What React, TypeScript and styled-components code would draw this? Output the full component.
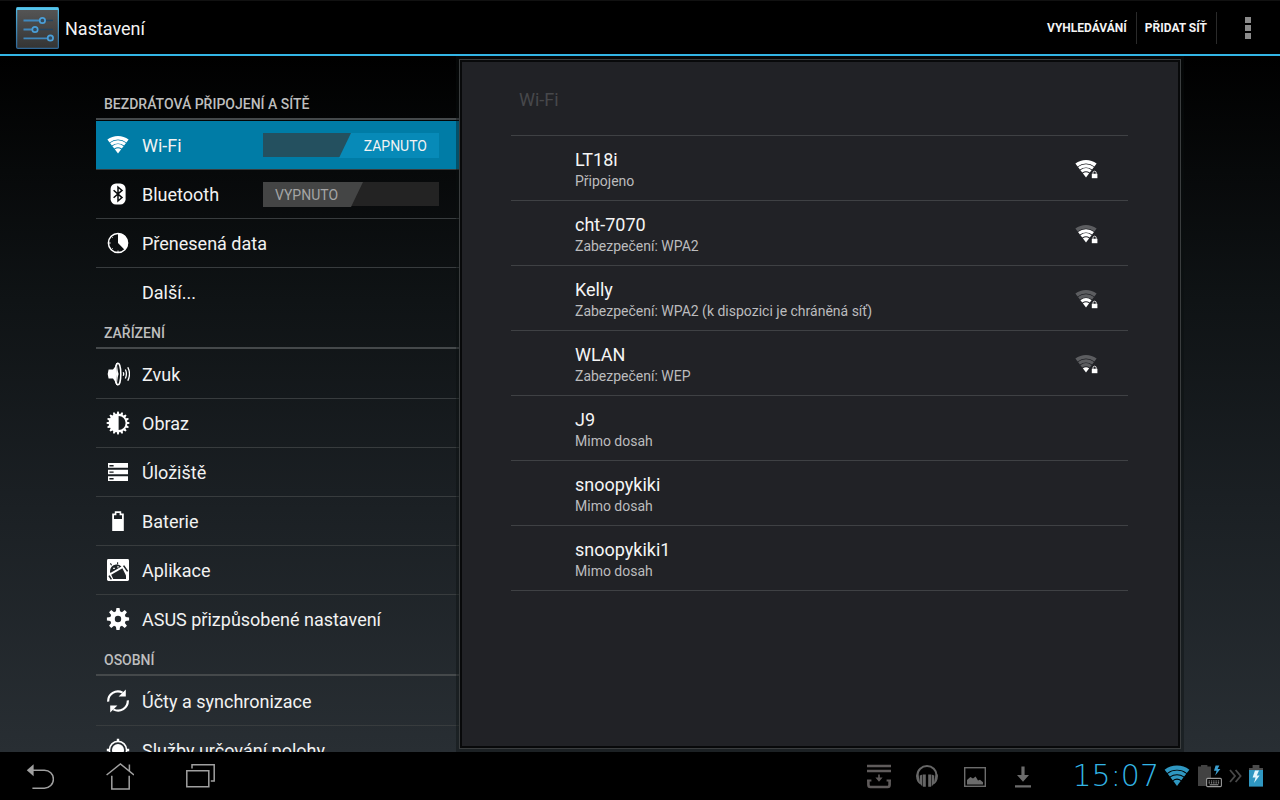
import React from "react";
import styled, { createGlobalStyle } from "styled-components";

const GlobalStyle = createGlobalStyle`
  *, *::before, *::after { box-sizing: border-box; }
  body {
    margin: 0;
    background: #000;
    color: #f2f2f2;
    font-family: Roboto, "Noto Sans", sans-serif;
  }
  button { font: inherit; color: inherit; background: none; border: 0; padding: 0; cursor: pointer; }
  a { color: inherit; text-decoration: none; }
  ul { list-style: none; margin: 0; padding: 0; }
  h1, h2, h3, p { margin: 0; font-weight: 400; }
`;

const Screen = styled.div`
  display: flex;
  flex-direction: column;
  height: 100vh;
  overflow: hidden;
`;

/* ---------- action bar ---------- */

const ActionBar = styled.header`
  display: flex;
  align-items: center;
  flex: none;
  height: 56px;
  padding: 0 16px 0 15px;
  background: #000;
  border-top: 1px solid #111;
  border-bottom: 2px solid #33b5e5;
`;

const AppTitle = styled.h1`
  flex: 1;
  margin-left: 6px;
  padding-top: 2px;
  font-size: 18px;
  line-height: 24px;
  color: #f3f3f3;
`;

const ActionButton = styled.button`
  height: 32px;
  padding: 0 9px 0 8px;
  border-right: 1px solid #2a2a2a;
  font-size: 12px;
  font-weight: 700;
  color: #f3f3f3;
`;

const OverflowButton = styled.button`
  display: flex;
  justify-content: center;
  align-items: center;
  width: 32px;
  height: 48px;
  margin-left: 15px;
`;

/* ---------- body ---------- */

const Body = styled.main`
  display: flex;
  flex: 1;
  min-height: 0;
  padding: 0 99px 0 96px;
  background: linear-gradient(#000 0%, #0f1315 35%, #1b2024 65%, #282e33 100%);
`;

const Sidebar = styled.nav`
  flex: none;
  width: 363px;
  padding-top: 31px;
  overflow-y: auto;
  scrollbar-width: none;
`;

const Category = styled.h2`
  height: 33px;
  margin-bottom: 1px;
  padding: 8px 8px 0;
  border-bottom: 2px solid #45494b;
  font-size: 14px;
  line-height: 18px;
  font-weight: 500;
  color: #bebebe;
`;

const Item = styled.li<{ $selected?: boolean }>`
  display: flex;
  align-items: center;
  height: 49px;
  padding-right: 20px;
  border-bottom: 1px solid #383c3e;
  background: ${(p) => (p.$selected ? "#007ca6" : "transparent")};
  &:last-child { height: 48px; border-bottom: 0; }
`;

const ItemLink = styled.a`
  display: flex;
  flex: 1;
  align-items: center;
  gap: 12px;
  height: 48px;
  padding-left: 10px;
`;

const ItemLabel = styled.span`
  padding-top: 2px;
  font-size: 18px;
  line-height: 24px;
  white-space: nowrap;
`;

const IconSlot = styled.span`
  display: flex;
  flex: none;
  width: 24px;
  height: 24px;
`;

const SwitchTrack = styled.label<{ $on: boolean }>`
  display: flex;
  justify-content: ${(p) => (p.$on ? "flex-end" : "flex-start")};
  width: 176px;
  height: 24px;
  background: ${(p) => (p.$on ? "#24505f" : "#232323")};
  cursor: pointer;
`;

const SwitchInput = styled.input`
  appearance: none;
  width: 0;
  height: 0;
  margin: 0;
`;

const SwitchThumb = styled.span<{ $on: boolean }>`
  width: 100px;
  height: 25px;
  padding: ${(p) => (p.$on ? "0 12px 0 0" : "0 0 0 12px")};
  text-align: ${(p) => (p.$on ? "right" : "left")};
  font-size: 14px;
  line-height: 26px;
  color: ${(p) => (p.$on ? "#f3f3f3" : "#a5a5a5")};
  background: ${(p) => (p.$on ? "#078ab8" : "#444545")};
  clip-path: ${(p) =>
    p.$on
      ? "polygon(12px 0, 100% 0, 100% 100%, 0 100%)"
      : "polygon(0 0, 100% 0, 88px 100%, 0 100%)"};
`;

/* ---------- detail panel ---------- */

const Frame = styled.section`
  display: flex;
  flex: 1;
  min-width: 0;
  margin: 3px 0;
  padding: 2px;
  border: 1px solid #3a3d3e;
  background: #08090a;
  box-shadow: 0 0 0 3px rgba(10, 14, 16, 0.4);
  z-index: 1;
`;

const Panel = styled.div`
  flex: 1;
  min-width: 0;
  padding: 0 50px 0 49px;
  overflow-y: auto;
  scrollbar-width: none;
  background: #212226;
`;

const PanelTitle = styled.h2`
  height: 74px;
  padding: 26px 8px 0;
  border-bottom: 1px solid #3f4144;
  font-size: 18px;
  line-height: 24px;
  color: #47484b;
`;

const NetworkButton = styled.button`
  display: flex;
  align-items: center;
  justify-content: space-between;
  width: 100%;
  height: 65px;
  padding: 2px 30px 0 64px;
  border-bottom: 1px solid #3f4144;
  text-align: left;
`;

const NetworkName = styled.span`
  display: block;
  font-size: 18px;
  line-height: 24px;
  color: #f5f5f5;
`;

const NetworkState = styled.span`
  display: block;
  font-size: 14px;
  line-height: 18px;
  color: #bcbcbe;
`;

/* ---------- system bar ---------- */

const SystemBar = styled.footer`
  display: flex;
  align-items: center;
  justify-content: space-between;
  flex: none;
  height: 48px;
  padding-right: 17px;
  background: #000;
`;

const Group = styled.div<{ $gap?: number }>`
  display: flex;
  align-items: center;
  gap: ${(p) => p.$gap ?? 0}px;
`;

const NavButton = styled.button`
  display: flex;
  align-items: center;
  justify-content: center;
  width: 80px;
  height: 48px;
`;

const Clock = styled.time`
  width: 128px;
  text-align: right;
  padding-right: 4px;
  font-family: "DejaVu Sans", sans-serif;
  font-weight: 200;
  font-size: 30px;
  line-height: 32px;
  color: #33b5e5;
`;

/* ---------- icons ---------- */

const SIN = 0.607;
const COS = 0.794;

function fan(r: number) {
  const x = r * SIN;
  const y = 20.5 - r * COS;
  return `M${12 - x} ${y}A${r} ${r} 0 0 1 ${12 + x} ${y}`;
}

type WifiProps = { level?: number; color?: string; dim?: string; locked?: boolean; size?: number };

function WifiIcon({ level = 4, color = "#fff", dim = "#5c5d60", locked, size = 24 }: WifiProps) {
  const tone = (n: number) => (level >= n ? color : dim);
  return (
    <svg width={size} height={size} viewBox="0 0 24 24" fill="none" aria-hidden="true">
      <path d={fan(15.7)} stroke={tone(4)} strokeWidth="3.6" />
      <path d={fan(11.6)} stroke={tone(3)} strokeWidth="3.1" />
      <path d={fan(7.7)} stroke={tone(2)} strokeWidth="3.1" />
      <path d={fan(5.2) + "L12 20.5Z"} fill={tone(1)} />
      {locked && (
        <>
          <path d="M16.8 22V16.4L18.2 13.2H22.8L24 16.4V22Z" fill="#212226" />
          <path d="M17.8 16.8H23.4V21.2H17.8Z" fill="#fff" />
          <path d="M19 17.2V15.8a1.6 1.6 0 0 1 3.2 0V17.2" stroke="#ddd" strokeWidth="1" />
        </>
      )}
    </svg>
  );
}

function Glyph({ children }: { children: React.ReactNode }) {
  return (
    <svg width="24" height="24" viewBox="0 0 24 24" fill="#fff" aria-hidden="true">
      {children}
    </svg>
  );
}

const polar = (r: number, deg: number) => {
  const a = (deg * Math.PI) / 180;
  return `${(12 + r * Math.sin(a)).toFixed(2)} ${(12 - r * Math.cos(a)).toFixed(2)}`;
};

/* outline of a toothed wheel */
function wheel(teeth: number, inner: number, outer: number, base: number, tip: number) {
  const points: string[] = [];
  for (let i = 0; i < teeth; i++) {
    const a = (360 / teeth) * i;
    points.push(polar(inner, a - base), polar(outer, a - tip), polar(outer, a + tip), polar(inner, a + base));
  }
  return "M" + points.join("L") + "Z";
}

const BluetoothIcon = () => (
  <Glyph>
    <rect x="4.6" y="1.4" width="15" height="21.2" rx="5.4" />
    <path d="M7.6 8.2L16 15.6L12 19V5L16 8.4L7.6 15.8" fill="none" stroke="#0a0c0d" strokeWidth="1.5" />
  </Glyph>
);

const DataIcon = () => (
  <Glyph>
    <circle cx="12" cy="12" r="9.6" fill="none" stroke="#fff" strokeWidth="1.5" />
    <path d="M12 12V2.2A9.8 9.8 0 0 1 18.8 19Z" />
    <path d="M2.5 12H4.6M12 21.5V19.6M5.2 5.2L6.6 6.6M5.2 18.8L6.6 17.4" stroke="#fff" strokeWidth="1" />
  </Glyph>
);

const SoundIcon = () => (
  <Glyph>
    <path d="M2.6 7.6H7Q9.4 5 10.2 1.2L12 .4V23.6L10.2 22.8Q9.4 19 7 16.4H2.6Q.8 12 2.6 7.6Z" />
    <ellipse cx="12" cy="12" rx="2.8" ry="10.8" fill="#15191b" stroke="#fff" strokeWidth="1.5" />
    <path d="M11 3Q9 12 11 21L11.8 15Q13.4 12 11.8 9Z" />
    <path d="M17.2 10.2Q18.2 12 17.2 13.8M19.4 7.6Q21.4 12 19.4 16.4M21.8 5.2Q25.2 12 21.8 18.8" fill="none" stroke="#fff" strokeWidth="1.3" />
  </Glyph>
);

const DisplayIcon = () => (
  <Glyph>
    <path d={wheel(16, 9.2, 11.4, 8.5, 3.5)} />
    <path d="M12.6 5A7 7 0 0 1 12.6 19Z" fill="#171b1e" />
  </Glyph>
);

const StorageIcon = () => (
  <Glyph>
    <path d="M2 3H22V7.8H2ZM2 9.8H22V14.2H2ZM2 16.2H22V21H2Z" />
    <path d="M3.4 5H7.6V6.4H3.4ZM3.4 11.4H7.6V12.8H3.4ZM3.4 18H7.6V19.4H3.4Z" fill="#1a1e21" />
  </Glyph>
);

const BatteryIcon = () => (
  <Glyph>
    <path d="M6.2 4.4H8.8V2.2H15.2V4.4H17.8V22H6.2ZM8 6.2V10H16V6.2H13.6V4H10.4V6.2Z" fillRule="evenodd" />
  </Glyph>
);

const AppsIcon = () => (
  <Glyph>
    <rect x="1" y="1" width="22" height="22" rx="1.4" />
    <path d="M4 13.6Q4.2 7.6 10 6.6Q13.2 6.2 15.4 8.6L4.4 15Z" fill="#1e2326" />
    <path d="M5.6 7.2L4.4 5.4M11.6 6.6V4.2" stroke="#1e2326" strokeWidth="1.1" />
    <path d="M7.2 10.3h1.6M11.2 8.8h1.6" stroke="#fff" strokeWidth="1.2" />
    <path d="M5.2 16.8L16.4 10.2L20 17.6V21H7.2Z" fill="#1e2326" />
    <path d="M17.6 7.6L21.6 13.4M3 17.6L5.4 21.4" stroke="#1e2326" strokeWidth="1.6" />
  </Glyph>
);

const GearIcon = () => (
  <Glyph>
    <path d={wheel(8, 7.9, 11.2, 15, 8) + "M12 8.8a3.2 3.2 0 1 0 0 6.4a3.2 3.2 0 0 0 0-6.4Z"} fillRule="evenodd" />
  </Glyph>
);

const SyncIcon = () => (
  <Glyph>
    <path d="M2.2 12.6A9.7 9.7 0 0 1 16.6 3.6M21.8 11.4A9.7 9.7 0 0 1 7.4 20.4" fill="none" stroke="#fff" strokeWidth="2.2" />
    <path d="M19.8 .6V7.4H12.6ZM4.2 23.4V16.6H11.4Z" />
  </Glyph>
);

const LocationIcon = () => (
  <Glyph>
    <circle cx="12" cy="12" r="8.6" fill="none" stroke="#fff" strokeWidth="1.6" />
    <circle cx="12" cy="12" r="6" />
    <path d="M10.8 .8H13.2V4H10.8ZM10.8 20H13.2V23.2H10.8ZM.8 10.8H4V13.2H.8ZM20 10.8H23.2V13.2H20Z" />
  </Glyph>
);

const SettingsLogo = () => (
  <svg width="44" height="44" viewBox="0 0 44 44" aria-hidden="true">
    <defs>
      <linearGradient id="plate" x1="0" y1="0" x2="0" y2="1">
        <stop offset="0" stopColor="#565656" />
        <stop offset="1" stopColor="#343434" />
      </linearGradient>
      <linearGradient id="rim" x1="0" y1="0" x2="0" y2="1">
        <stop offset="0" stopColor="#4fb4e0" />
        <stop offset="1" stopColor="#2f6695" />
      </linearGradient>
    </defs>
    <rect x="1.6" y="2" width="41.8" height="40.4" rx="1.5" fill="url(#plate)" stroke="url(#rim)" strokeWidth="1.3" />
    <path d="M1.6 1.2H43.4V4H1.6Z" fill="#55c5ec" />
    <path d="M30 14.5H38M22 23.5H38" stroke="#24445f" strokeWidth="1.6" />
    <path d="M8.5 14.5H25M8.5 23.5H17M8.5 32.4H32.4" stroke="#4088bd" strokeWidth="1.8" />
    <g fill="#35495a" stroke="#4a9fd8" strokeWidth="1.7">
      <circle cx="27.4" cy="14.5" r="2.7" />
      <circle cx="20" cy="23.5" r="2.7" />
      <circle cx="35.4" cy="32" r="2.7" />
    </g>
  </svg>
);

const OverflowDots = () => (
  <svg width="6" height="22" viewBox="0 0 6 22" fill="#8b8b8b" aria-hidden="true">
    <path d="M0 0H6V6H0ZM0 8H6V14H0ZM0 16H6V22H0Z" />
  </svg>
);

const BackIcon = () => (
  <svg width="28" height="28" viewBox="0 0 28 28" fill="none" aria-hidden="true">
    <path d="M6 8.2H18.4A8.9 8.9 0 0 1 18.4 26.2H6.4" stroke="#a0a0a0" strokeWidth="1.5" />
    <path d="M.8 8.2L7.6 2.2V14.2Z" fill="#a0a0a0" />
  </svg>
);

const HomeIcon = () => (
  <svg width="28" height="28" viewBox="0 0 28 28" fill="none" stroke="#a0a0a0" strokeWidth="1.5" aria-hidden="true">
    <path d="M.6 13L14.4 2L28 13M23.4 9V2.4M5.8 13.8V27H23.2V13.8" />
  </svg>
);

const RecentsIcon = () => (
  <svg width="30" height="28" viewBox="0 0 30 28" fill="none" stroke="#a0a0a0" strokeWidth="1.5" aria-hidden="true">
    <path d="M1.8 8.8H23.8V24.8H1.8ZM7 6.6V2.8H29.2V19H25.8" />
  </svg>
);

const InboxIcon = () => (
  <svg width="24" height="26" viewBox="0 0 24 26" fill="none" stroke="#5f5b5b" strokeWidth="2.6" aria-hidden="true">
    <path d="M0 3H24M0 8H24M1.4 17V21.8Q1.4 24 3.4 24H20.6Q22.6 24 22.6 21.8V17" />
    <path d="M0 17.4H4.4M19.6 17.4H24" strokeWidth="2" />
    <path d="M11.2 11.4H12.8V14.6H15.6L12 18.8L8.4 14.6H11.2Z" fill="#5f5b5b" stroke="none" />
  </svg>
);

const HeadphonesIcon = () => (
  <svg width="24" height="24" viewBox="0 0 24 24" fill="#666" aria-hidden="true">
    <path d="M2.4 13V11.4A9.6 9.4 0 0 1 21.6 11.4V13" fill="none" stroke="#666" strokeWidth="2" />
    <path d="M1.2 10.6H3.4L5.4 20.4Q1.2 17.6 1.2 13ZM22.8 10.6H20.6L18.6 20.4Q22.8 17.6 22.8 13Z" />
    <path d="M4.8 11.6L7.4 10.4V22.4L4.8 19.6ZM8 10.4H10.8V22.8H8ZM19.2 11.6L16.6 10.4V22.4L19.2 19.6ZM16 10.4H13.2V22.8H16Z" />
  </svg>
);

const PictureIcon = () => (
  <svg width="24" height="24" viewBox="0 0 24 24" aria-hidden="true">
    <rect x="1.7" y="3.7" width="20.6" height="18.6" fill="none" stroke="#6c6c6c" strokeWidth="1.4" />
    <path d="M4 20.4V16L7.4 13L10 14.6L12.6 12.6L15 16.4L17 15.8L20 18.2V20.4Z" fill="#6c6c6c" />
  </svg>
);

const DownloadIcon = () => (
  <svg width="24" height="24" viewBox="0 0 24 24" fill="#6c6c6c" aria-hidden="true">
    <path d="M10.4 2.6H13.6V11H18L12 17.8L6 11H10.4ZM4 21.2H20V23.6H4Z" />
  </svg>
);

const DockBatteryIcon = () => (
  <svg width="24" height="24" viewBox="0 0 24 24" aria-hidden="true">
    <path d="M0 2.6H3V1H9.4V2.6H13V22H0Z" fill="#424242" />
    <path d="M17.6 1.4L16 6.8H18.6L17.2 11.6L22.4 5H19.6L21.4 1.4Z" fill="#3b9fd0" />
    <rect x="8.6" y="14.4" width="14.8" height="8.2" rx="1" fill="#000" stroke="#9a9a9a" strokeWidth="1.1" />
    <path d="M10.6 17H21.6M10.6 18.9H21.6" stroke="#9a9a9a" strokeWidth="1.1" strokeDasharray="1.3 1" />
    <path d="M11.6 20.8H20.4" stroke="#9a9a9a" strokeWidth="1.1" />
  </svg>
);

const ChevronsIcon = () => (
  <svg width="13" height="14" viewBox="0 0 13 14" fill="none" stroke="#484848" strokeWidth="1.8" aria-hidden="true">
    <path d="M1 1L6 7L1 13M6.6 1L11.6 7L6.6 13" />
  </svg>
);

const ChargingIcon = () => (
  <svg width="14" height="22" viewBox="0 0 14 22" aria-hidden="true">
    <path d="M3.6 0H10.4V3H3.6ZM0 3H14V5H0Z" fill="#4c4c4c" />
    <path d="M0 5H14V21.6H0Z" fill="#2f97c1" />
    <path d="M6 5.6L3.6 12.4H6.6L5 18L10.6 10.4H7.8L10 5.6Z" fill="#e4f6fc" />
  </svg>
);

/* ---------- data ---------- */

type Entry = { label: string; icon?: React.ReactNode; selected?: boolean; toggle?: "on" | "off" };

const sections: { title: string; items: Entry[] }[] = [
  {
    title: "BEZDRÁTOVÁ PŘIPOJENÍ A SÍTĚ",
    items: [
      { label: "Wi-Fi", icon: <WifiIcon />, selected: true, toggle: "on" },
      { label: "Bluetooth", icon: <BluetoothIcon />, toggle: "off" },
      { label: "Přenesená data", icon: <DataIcon /> },
      { label: "Další..." },
    ],
  },
  {
    title: "ZAŘÍZENÍ",
    items: [
      { label: "Zvuk", icon: <SoundIcon /> },
      { label: "Obraz", icon: <DisplayIcon /> },
      { label: "Úložiště", icon: <StorageIcon /> },
      { label: "Baterie", icon: <BatteryIcon /> },
      { label: "Aplikace", icon: <AppsIcon /> },
      { label: "ASUS přizpůsobené nastavení", icon: <GearIcon /> },
    ],
  },
  {
    title: "OSOBNÍ",
    items: [
      { label: "Účty a synchronizace", icon: <SyncIcon /> },
      { label: "Služby určování polohy", icon: <LocationIcon /> },
    ],
  },
];

const networks: { name: string; state: string; level?: number }[] = [
  { name: "LT18i", state: "Připojeno", level: 4 },
  { name: "cht-7070", state: "Zabezpečení: WPA2", level: 3 },
  { name: "Kelly", state: "Zabezpečení: WPA2 (k dispozici je chráněná síť)", level: 2 },
  { name: "WLAN", state: "Zabezpečení: WEP", level: 1 },
  { name: "J9", state: "Mimo dosah" },
  { name: "snoopykiki", state: "Mimo dosah" },
  { name: "snoopykiki1", state: "Mimo dosah" },
];

function Switch({ name, initial }: { name: string; initial: boolean }) {
  const [on, setOn] = React.useState(initial);
  return (
    <SwitchTrack $on={on}>
      <SwitchInput
        type="checkbox"
        role="switch"
        aria-label={name}
        checked={on}
        onChange={(e) => setOn(e.target.checked)}
      />
      <SwitchThumb $on={on}>{on ? "ZAPNUTO" : "VYPNUTO"}</SwitchThumb>
    </SwitchTrack>
  );
}

export default function App() {
  return (
    <Screen>
      <GlobalStyle />
      <ActionBar>
        <SettingsLogo />
        <AppTitle>Nastavení</AppTitle>
        <ActionButton type="button">VYHLEDÁVÁNÍ</ActionButton>
        <ActionButton type="button">PŘIDAT SÍŤ</ActionButton>
        <OverflowButton type="button" aria-label="Další možnosti">
          <OverflowDots />
        </OverflowButton>
      </ActionBar>

      <Body>
        <Sidebar aria-label="Nastavení">
          {sections.map((section) => (
            <React.Fragment key={section.title}>
              <Category>{section.title}</Category>
              <ul>
                {section.items.map((item) => (
                  <Item key={item.label} $selected={item.selected}>
                    <ItemLink href="#" aria-current={item.selected ? "page" : undefined}>
                      <IconSlot>{item.icon}</IconSlot>
                      <ItemLabel>{item.label}</ItemLabel>
                    </ItemLink>
                    {item.toggle && <Switch name={item.label} initial={item.toggle === "on"} />}
                  </Item>
                ))}
              </ul>
            </React.Fragment>
          ))}
        </Sidebar>

        <Frame>
          <Panel>
            <PanelTitle>Wi-Fi</PanelTitle>
            <ul>
              {networks.map((network) => (
                <li key={network.name}>
                  <NetworkButton type="button">
                    <span>
                      <NetworkName>{network.name}</NetworkName>
                      <NetworkState>{network.state}</NetworkState>
                    </span>
                    {network.level && <WifiIcon level={network.level} locked />}
                  </NetworkButton>
                </li>
              ))}
            </ul>
          </Panel>
        </Frame>
      </Body>

      <SystemBar>
        <Group>
          <NavButton type="button" aria-label="Zpět"><BackIcon /></NavButton>
          <NavButton type="button" aria-label="Domů"><HomeIcon /></NavButton>
          <NavButton type="button" aria-label="Poslední aplikace"><RecentsIcon /></NavButton>
        </Group>
        <Group>
          <Group $gap={24}>
            <InboxIcon />
            <HeadphonesIcon />
            <PictureIcon />
            <DownloadIcon />
          </Group>
          <Clock dateTime="15:07">15:07</Clock>
          <Group $gap={7}>
            <WifiIcon color="#2f97c1" size={28} />
            <DockBatteryIcon />
            <ChevronsIcon />
            <ChargingIcon />
          </Group>
        </Group>
      </SystemBar>
    </Screen>
  );
}
